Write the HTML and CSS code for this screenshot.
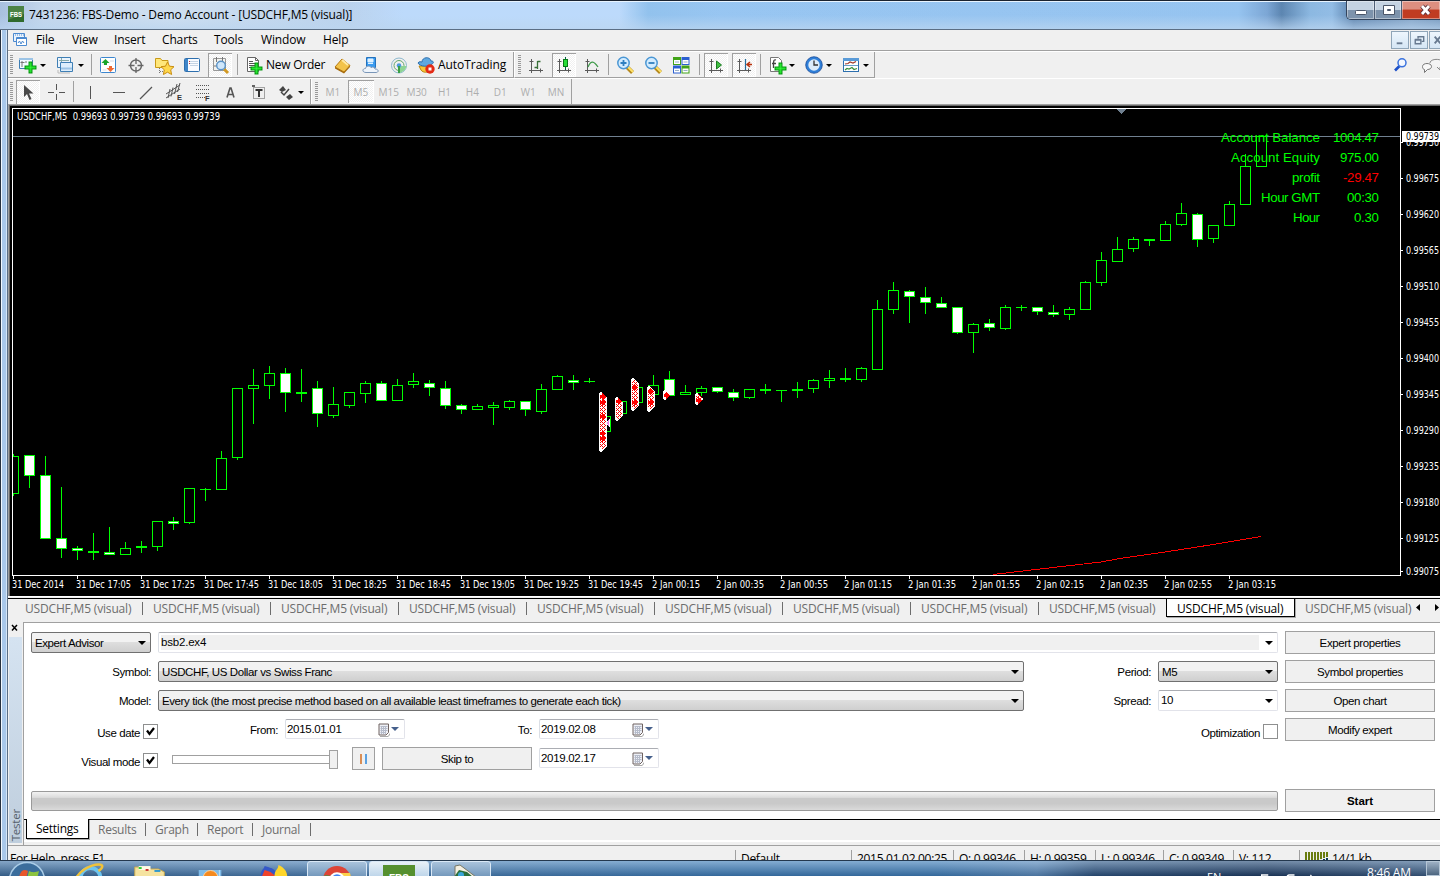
FILE: index.html
```html
<!DOCTYPE html>
<html lang="en">
<head>
<meta charset="utf-8">
<title>FBS-Demo - Demo Account</title>
<link rel="stylesheet" href="styles.css">
</head>
<body>
<svg width="0" height="0" class="defs">
  <defs>
    <symbol id="plus" viewBox="0 0 13 13"><path d="M4.5 .5h4v4h4v4h-4v4h-4v-4h-4v-4h4z" fill="#0b9a14"/><path d="M6 2h1v4h4v1H7v4H6V7H2V6h4z" fill="#35f53c" stroke="#22e02a"/></symbol>
    <symbol id="cal" viewBox="0 0 12 14"><path d="M2 13h8l2-3v2l-2 2H2z" fill="#aaa"/><path d="M1 1h9.500v8.500l-2.500 2.500H1z" fill="#eef0f6" stroke="#6e6260"/><path d="M2.500 3.500h7M2.500 5.500h7M2.500 7.500h7M2.500 9.500h5M3.500 3v8M5.500 3v8M7.500 3v8" stroke="#b5bbca"/></symbol>
    <symbol id="axes" viewBox="0 0 24 24"><path d="M7.500 6v14M5 17.500h14M5.500 8.500h4M16.500 15.500v4" stroke="#5a5a5a" fill="none"/></symbol>
    <symbol id="check" viewBox="0 0 15 15"><path d="M3 5.500l2.500 3.500L10 3" fill="none" stroke="#000" stroke-width="2.200"/></symbol>
  </defs>
</svg>
<div class="window">
  <header class="titlebar">
    <svg class="app-icon" viewBox="0 0 16 16"><rect width="16" height="16" fill="#2f6a2c"/><path d="M0 0h16v8L0 14z" fill="#4c8345"/><text x="2" y="11" font-size="6.500" font-weight="bold" textLength="12" lengthAdjust="spacingAndGlyphs" fill="#fff">FBS</text></svg>
    <span class="title">7431236: FBS-Demo - Demo Account - [USDCHF,M5 (visual)]</span>
    <div class="win-buttons">
      <span class="wb wb-min"><svg viewBox="0 0 28 18"><rect x="8.500" y="9.500" width="11" height="4" rx="1" fill="#fff" stroke="#4a5568"/></svg></span>
      <span class="wb wb-max"><svg viewBox="0 0 28 18"><path d="M8.500 4.500h11v9h-11zM12.500 8.500h3v1h-3z" fill="#fff" stroke="#4a5568" fill-rule="evenodd"/></svg></span>
      <span class="wb wb-close"><svg viewBox="0 0 38 18"><path d="M24 6l7 8M31 6l-7 8" stroke="#5a3038" stroke-width="4.500"/><path d="M24 6l7 8M31 6l-7 8" stroke="#fff" stroke-width="2.800"/></svg></span>
    </div>
  </header>
  <div class="body">
    <nav class="menu">
      <svg class="menu-icon" viewBox="0 0 16 16"><path d="M1.500 1.500h11v8h-11z" fill="#eaf3fc" stroke="#4c8ad0"/><path d="M1 3h12" stroke="#4c8ad0" stroke-dasharray="1 1"/><path d="M4.500 5.500h10v8h-10z" fill="#fff" stroke="#4c8ad0"/><path d="M4.500 6.500h10" stroke="#4c8ad0"/><path d="M6 11l1.500-2L9 12l1.500-3 1.500 2" fill="none" stroke="#4c8ad0"/></svg>
      <span class="w-file">File</span><span class="w-view">View</span><span class="w-insert">Insert</span><span class="w-charts">Charts</span><span class="w-tools">Tools</span><span class="w-window">Window</span><span>Help</span>
      <div class="mdi">
        <i><svg viewBox="0 0 17 17"><path d="M5 12h6" stroke="#687a90" stroke-width="2"/></svg></i>
        <i><svg viewBox="0 0 17 17"><path d="M7.500 7V5h6v5h-2M7 5h7M4.500 8.500h6v4h-6zM4 8h7" fill="none" stroke="#687a90" stroke-width="1.500"/></svg></i>
        <i><svg viewBox="0 0 17 17"><path d="M5 5l6 7M11 5l-6 7" stroke="#687a90" stroke-width="2"/></svg></i>
      </div>
    </nav>
    <div class="bars">
      <div class="toolbar tb1">
        <b class="grip"></b>
        <svg class="ic m3" viewBox="0 0 24 24"><path d="M3.500 5.500h13v10h-13z" fill="#f4faff" stroke="#3f7fb5"/><path d="M3 5h14v2H3z" fill="#9cc4e6"/><path d="M6 8v6M4.500 9.500h4M10 8v2" stroke="#777"/><use href="#plus" x="8" y="8" width="13" height="13"/></svg><b class="dd"></b>
        <svg class="ic m8" viewBox="0 0 24 24"><path d="M3.500 4.500h13v10h-13z" fill="#eaf4fd" stroke="#3f7fb5"/><path d="M5 7.500h10M7.500 5v8" stroke="#8aa" /><path d="M6.500 9.500h12v9h-12z" fill="#ddeefc" stroke="#3f7fb5"/><path d="M7 15.500h11" stroke="#9cc4e6" stroke-width="2"/><path d="M4 17v3h12" fill="none" stroke="#bbb"/></svg><b class="dd"></b>
        <b class="sep m7"></b>
        <svg class="ic m4" viewBox="0 0 24 24"><rect x="4.500" y="4.500" width="15" height="15" rx="1" fill="#fff" stroke="#3d87cf"/><path d="M6.500 8h3M6.500 11h3M14 8h4M6.500 17h4" stroke="#d5dde8"/><path d="M9.500 6l4 4h-2.500v2h-3v-2H5.500z" fill="#18a52a"/><path d="M14.500 19l-4-4H13v-2h3v2h2.500z" fill="#ee6a34"/></svg>
        <svg class="ic m4" viewBox="0 0 24 24"><circle cx="12" cy="12.500" r="5.500" fill="none" stroke="#666" stroke-width="1.400"/><path d="M12 5v6M12 14v6M4.500 12.500h6M13.500 12.500h6" stroke="#666" stroke-width="1.300"/></svg>
        <svg class="ic m4" viewBox="0 0 24 24"><path d="M3.500 14.500v-9h5l1.500 2h6v7z" fill="#ffe77a" stroke="#c99a18"/><path d="M7.500 15v6M8 18.500h3" stroke="#777" stroke-dasharray="1 1"/><path d="M15.500 9l2 4.200 4.500.5-3.300 3.100.9 4.700-4.100-2.300-4.100 2.300.9-4.700L9 13.700l4.500-.5z" fill="#ffd84c" stroke="#c98d10"/></svg>
        <svg class="ic m4" viewBox="0 0 24 24"><rect x="4.500" y="5.500" width="15" height="13" rx="1" fill="#f8fbff" stroke="#2d6fae"/><path d="M5 6h3v12H5z" fill="#3f85c8"/><path d="M10 8.500h8M10 10.500h8M10 12.500h8" stroke="#c3d3e4"/><path d="M9 8.500h1M9 10.500h1" stroke="#c33"/></svg>
        <svg class="ic pressed m4" viewBox="0 0 24 24"><path d="M5.500 5.500h12v12h-12z" fill="#f4f4f0" stroke="#999"/><path d="M8.500 4v5M14.500 4v8M6 13h3" stroke="#777"/><path d="M16 16l4 4" stroke="#d29a24" stroke-width="3"/><circle cx="13" cy="12.500" r="4.300" fill="#cfe7fb" stroke="#5b93c7" stroke-width="1.400"/></svg>
        <b class="sep m5"></b>
        <svg class="ic m4" viewBox="0 0 24 24"><path d="M5.500 4.500h8l3 3v11h-11z" fill="#fff" stroke="#666"/><path d="M7 8.500h4M7 10.500h7M7 12.500h7M7 14.500h5" stroke="#555"/><path d="M13.500 4.500v3h3" fill="none" stroke="#666"/><use href="#plus" x="8" y="9" width="13" height="13"/></svg><span class="tbtext w-order">New Order</span>
        <svg class="ic" viewBox="0 0 24 24"><path d="M4 14l7-8 8 6.500-6 6.500z" fill="#f3c34a" stroke="#b77a10"/><path d="M4 14l9 5v1.500l-9-5zM13 19l6-6.500v1.500l-6 6.500z" fill="#a66a0a"/><path d="M11 7l6 5" stroke="#ffe9a4" stroke-width="2"/></svg>
        <svg class="ic m4" viewBox="0 0 24 24"><path d="M7.500 4.500h9v10h-9z" fill="#3a9bf0" stroke="#2472bd"/><path d="M9 6h5v3H9zM9 10.500h5" fill="#dff1ff" stroke="#dff1ff"/><path d="M7 19.500c-4 0-4-4-.5-4 .5-3 4.500-3 5.500-1 2-1 4 0 4 1.500 4 0 4 3.500 1 3.500z" fill="#eef4fb" stroke="#7a96b8"/></svg>
        <svg class="ic m4" viewBox="0 0 24 24"><g fill="none" stroke="#8db8cd"><circle cx="12" cy="12.500" r="7.500"/><circle cx="12" cy="12.500" r="5" stroke="#66a66a"/></g><path d="M12 13v7c4-.5 7-4 7.500-7z" fill="#8ed494"/><circle cx="12" cy="12.500" r="2.300" fill="#4e9bdd"/><path d="M12 13v7" stroke="#39a046" stroke-width="2"/></svg>
        <svg class="ic m3" viewBox="0 0 24 24"><path d="M5 13h13l-2 4c-2 3-7 3-9 0z" fill="#f7c739" stroke="#b98511"/><path d="M4 10c1-2 3-1 4-1 0-5 8-6 9-1 3 0 3 2 1 3-3 3-12 3-14-1z" fill="#5fa8e0" stroke="#2d6fae"/><circle cx="16" cy="16" r="4.700" fill="#e32a15"/><path d="M14.500 14.500h3v3h-3z" fill="#fff"/></svg><span class="tbtext">AutoTrading</span>
      </div>
      <div class="toolbar tb1b">
        <b class="grip m3"></b>
        <svg class="ic m3" viewBox="0 0 24 24"><use href="#axes" width="24" height="24"/><path d="M13.500 8v8M13.500 8.500h3M10.500 14.500h3" stroke="#387038" stroke-width="1.300"/></svg>
        <svg class="ic pressed m4" viewBox="0 0 24 24"><use href="#axes" width="24" height="24"/><path d="M13.500 4v13" stroke="#064"/><rect x="11.500" y="6.500" width="4" height="7" fill="#27dd37" stroke="#087a18"/></svg>
        <svg class="ic m4" viewBox="0 0 24 24"><use href="#axes" width="24" height="24"/><path d="M8 14c3-7 6-6 10 0" stroke="#3f9a4a" fill="none" stroke-width="1.300"/></svg>
        <b class="sep m4"></b>
        <svg class="ic m4" viewBox="0 0 24 24"><path d="M14 14l5.500 5.500" stroke="#b5881c" stroke-width="4"/><path d="M15 14l5 5" stroke="#ffe36a" stroke-width="2"/><circle cx="10.500" cy="10" r="5.700" fill="#d3ecff" stroke="#4b97d4" stroke-width="1.500"/><path d="M10.500 7v6M7.500 10h6" stroke="#2e7fc0" stroke-width="1.800"/></svg>
        <svg class="ic m4" viewBox="0 0 24 24"><path d="M14 14l5.500 5.500" stroke="#b5881c" stroke-width="4"/><path d="M15 14l5 5" stroke="#ffe36a" stroke-width="2"/><circle cx="10.500" cy="10" r="5.700" fill="#d3ecff" stroke="#4b97d4" stroke-width="1.500"/><path d="M7.500 10h6" stroke="#2e7fc0" stroke-width="1.800"/></svg>
        <svg class="ic m4" viewBox="0 0 24 24"><path d="M4 4h8v8H4zM12.500 12.500h8v8h-8z" fill="#41a317"/><path d="M12.500 4h8v8h-8zM4 12.500h8v8H4z" fill="#2a5fd0"/><path d="M5 7h6v4H5zM13.500 7h6v4h-6zM5 15.500h6v4H5zM13.500 15.500h6v4h-6z" fill="#fff"/><path d="M6 9h4M14.500 9h4M6 17.500h4M14.500 17.500h4" stroke="#9ab0c8"/></svg>
        <b class="sep m6"></b>
        <svg class="ic pressed m4" viewBox="0 0 24 24"><use href="#axes" width="24" height="24"/><path d="M12.500 8l5 4-5 4z" fill="#3fbf3f" stroke="#1c7c22"/></svg>
        <svg class="ic pressed m4" viewBox="0 0 24 24"><use href="#axes" width="24" height="24"/><path d="M13.500 6v11" stroke="#246c9c" stroke-width="1.200"/><path d="M20 11.500h-4M18 9l-3 2.500 3 2.500" stroke="#b8320c" fill="none" stroke-width="1.500"/></svg>
        <b class="sep m4"></b>
        <svg class="ic m4" viewBox="0 0 24 24"><path d="M5.500 4.500h8l3 3v11h-11z" fill="#fff" stroke="#777"/><path d="M11 7c-3-1-2.500 3-2.500 8M7 10.500h4" fill="none" stroke="#444" stroke-width="1.300"/><use href="#plus" x="9" y="9" width="13" height="13"/></svg><b class="dd"></b>
        <svg class="ic m7" viewBox="0 0 24 24"><circle cx="12" cy="12" r="7" fill="#dcecfb" stroke="#2f7fd8" stroke-width="2.600"/><circle cx="12" cy="12" r="8.300" fill="none" stroke="#0d3f8f" stroke-width=".7"/><path d="M12 7.500V12h4" fill="none" stroke="#333" stroke-width="1.300"/></svg><b class="dd"></b>
        <svg class="ic m7" viewBox="0 0 24 24"><rect x="4.500" y="5.500" width="15" height="13" fill="#fff" stroke="#2d6fae"/><path d="M4 5h16v3H4z" fill="#5a9bd8"/><path d="M5 12.500h14" stroke="#6a9fc8"/><path d="M6 11l3-.5 2-1.500 3 1 3-1.500" fill="none" stroke="#a33a2a" stroke-width="1.200"/><path d="M6 17l2-1.500 2 .5 3-1.500 2 2 3-1" fill="none" stroke="#3a8f3a" stroke-width="1.200"/></svg><b class="dd"></b>
      </div>
      <div class="search">
        <svg viewBox="0 0 16 16"><path d="M6.500 9L2 13.500" stroke="#1d50c8" stroke-width="2.600"/><circle cx="9" cy="5.800" r="4" fill="#f4f8ff" stroke="#3a72dd" stroke-width="1.500"/></svg>
        <svg class="chat" viewBox="0 0 20 18"><path d="M9 6c0-5 14-5 14 1 0 2-2 3-4 3v3l-3-3" fill="#f4f4f4" stroke="#888"/><path d="M1.500 9.500c0-4 9-4 9 0 0 2-2 3-4 3l-3 3v-3c-1 0-2-1-2-3z" fill="#f8f8f8" stroke="#777"/></svg>
      </div>
    </div>
    <div class="bars bars2">
      <div class="toolbar tb2">
        <b class="grip"></b>
        <svg class="ic pressed m3" viewBox="0 0 24 24"><path d="M8 5v12l3-3 2.500 6 2-1-2.500-5.500h4.500z" fill="#4a4a4a"/></svg>
        <svg class="ic m4" viewBox="0 0 24 24"><path d="M12.500 4v6M12.500 14v6M4 12.500h6M15 12.500h6" stroke="#555"/></svg>
        <b class="sep m5"></b>
        <svg class="ic m4" viewBox="0 0 24 24"><path d="M12.500 6v13" stroke="#555"/></svg>
        <svg class="ic m4" viewBox="0 0 24 24"><path d="M7 12.500h12" stroke="#555"/></svg>
        <svg class="ic m4" viewBox="0 0 24 24"><path d="M6 19L18 7" stroke="#555" stroke-width="1.200"/></svg>
        <svg class="ic m4" viewBox="0 0 24 24"><path d="M4 14L18 5M4 18L18 9M8 9l-2 9M11 7.500l-2 9M15 4l-2.500 10M18 3l-2.500 9" stroke="#555"/><text x="15" y="20" font-size="7.500" font-weight="bold" fill="#333">E</text></svg>
        <svg class="ic m4" viewBox="0 0 24 24"><path d="M6 5.500h14M6 9.500h14M6 13.500h14M6 17.500h9" stroke="#555" stroke-dasharray="1 1"/><text x="15" y="21" font-size="7.500" font-weight="bold" fill="#333">F</text></svg>
        <svg class="ic m4" viewBox="0 0 24 24"><path d="M9 17.500l3-9.500h1l3 9.500M10 14.500h5" fill="none" stroke="#555" stroke-width="1.600"/></svg>
        <svg class="ic m4" viewBox="0 0 24 24"><path d="M7.500 7.500h11v11h-11z" fill="none" stroke="#555" stroke-dasharray="1 1"/><path d="M9.500 10h7M13 9v8" stroke="#333" stroke-width="2"/><path d="M6 6h3" stroke="#333" stroke-width="1.500"/></svg>
        <svg class="ic m4" viewBox="0 0 24 24"><path d="M5 10l4-4 3 4-4 2zM12 17l4-3 3 3-4 3z" fill="#444"/><path d="M7 12l3 3 5-6" fill="none" stroke="#444" stroke-width="1.500"/></svg><b class="dd"></b>
      </div>
      <div class="toolbar tb2b">
        <b class="grip m3"></b>
        <span class="tf m2">M1</span><span class="tf pressed">M5</span><span class="tf">M15</span><span class="tf">M30</span><span class="tf">H1</span><span class="tf">H4</span><span class="tf">D1</span><span class="tf">W1</span><span class="tf">MN</span>
      </div>
    </div>
    <svg class="chart" id="chart" viewBox="8 105 1432 492" shape-rendering="crispEdges"></svg>
    <div class="ctabs" id="ctabs"></div>
    <section class="tester">
      <aside><svg viewBox="0 0 8 8"><path d="M1 1l5 5.500M6 1L1 6.500" stroke="#000" stroke-width="1.500"/></svg><div><span>Tester</span></div></aside>
      <div class="panel">
        <div class="form">
          <div class="row">
            <div class="sel w120">Expert Advisor</div><div class="combo w1120"><em>bsb2.ex4</em></div><button>Expert properties</button>
          </div>
          <div class="row">
            <label class="w120">Symbol:</label><div class="sel w866">USDCHF, US Dollar vs Swiss Franc</div><label class="w120">Period:</label><div class="sel w120">M5</div><button>Symbol properties</button>
          </div>
          <div class="row">
            <label class="w120">Model:</label><div class="sel w866">Every tick (the most precise method based on all available least timeframes to generate each tick)</div><label class="w120">Spread:</label><div class="combo w120">10</div><button>Open chart</button>
          </div>
          <div class="row">
            <label class="w109 low">Use date</label><svg class="cb"><use href="#check" width="15" height="15"/></svg><label class="w113">From:</label><div class="date">2015.01.01<svg><use href="#cal" width="12" height="14"/></svg></div><label class="w120">To:</label><div class="date">2019.02.08<svg><use href="#cal" width="12" height="14"/></svg></div><label class="grow low">Optimization</label><svg class="cb cbr"></svg><button>Modify expert</button>
          </div>
          <div class="row">
            <label class="w109 low">Visual mode</label><svg class="cb"><use href="#check" width="15" height="15"/></svg><div class="slider"><i></i></div><div class="pause"><i></i><i></i></div><button class="skip">Skip to</button><div class="date">2019.02.17<svg><use href="#cal" width="12" height="14"/></svg></div>
          </div>
          <div class="row last"><div class="progress"></div><button class="bold">Start</button></div>
        </div>
        <div class="ttabs"><span class="on">Settings</span><span class="t-res">Results</span><span class="t-gra">Graph</span><span class="t-rep">Report</span><span class="t-jou">Journal</span></div>
      </div>
    </section>
    <footer class="status">
      <span class="s-help">For Help, press F1</span><span class="s-def">Default</span><span class="s-date">2015.01.02 00:25</span><span class="s-o">O: 0.99346</span><span class="s-h">H: 0.99359</span><span class="s-l">L: 0.99346</span><span class="s-c">C: 0.99349</span><span class="s-v">V: 112</span><span class="s-kb"><svg viewBox="0 0 24 12"><path d="M1 0v12M4 0v12M7 0v12M10 0v9M13 0v8M16 0v7M19 0v6M22 0v5" stroke="#6a7d10" stroke-width="2"/><path d="M10 10v2M13 9v3M16 8v4M19 7v5M22 6v6" stroke="#0e3c52" stroke-width="2"/></svg>14/1 kb</span>
    </footer>
  </div>
</div>
<div class="taskbar">
  <svg class="start" viewBox="0 0 60 16"><circle cx="27" cy="19" r="17.500" fill="#3b6d9c" stroke="#a9cbe6" stroke-width="1.500"/><path d="M19 16c2-7 5-8 9-6l-2 8z" fill="#e8572b"/><path d="M29 10c4 2 7 1 10 0l-2 8H27z" fill="#8cc43f"/></svg>
  <svg class="tk" viewBox="0 0 62 16"><circle cx="31" cy="17" r="10" fill="none" stroke="#6cc5f0" stroke-width="4"/><path d="M17 16C25 4 42 1 43 5c0 2-2 4-4 5" fill="none" stroke="#f0c23a" stroke-width="2.500"/></svg>
  <svg class="tk" viewBox="0 0 62 16"><path d="M14 16V6h10l2 2h12l6 3v5z" fill="#f5e3a0" stroke="#c9a94e"/><path d="M18 5h12v4H18z" fill="#fffbe6"/><path d="M18 7h3" stroke="#3c3" stroke-width="2"/><path d="M25 9h3" stroke="#c33" stroke-width="2"/><path d="M34 10h6" stroke="#39c" stroke-width="2"/></svg>
  <svg class="tk" viewBox="0 0 62 16"><path d="M17 9h23v7H17z" fill="#7fbbe8"/><path d="M38 9v7" stroke="#bfe0f7"/><circle cx="29" cy="17" r="7.500" fill="#f58a1f" stroke="#fbd2a0"/></svg>
  <svg class="tk" viewBox="0 0 62 16"><path d="M18 16c0-8 3-7 4-11 4 2 12 1 13 11z" fill="#3558c8"/><path d="M19 16l3-7 6 2 6 5z" fill="#f0432a"/><path d="M32 16c0-8 4-7 4-12 7 3 9 8 9 12z" fill="#ffd62a"/></svg>
  <div class="tbtn"><svg viewBox="0 0 58 16"><circle cx="29" cy="19" r="14" fill="#dd4436"/><path d="M16 14l8 5v-4z" fill="#2f9e4f"/><path d="M29 12h13l1 4H29z" fill="#fbd14b"/><circle cx="29" cy="19" r="6.800" fill="#4285f4" stroke="#fff" stroke-width="2"/></svg></div>
  <div class="tbtn lit"><svg viewBox="0 0 58 16"><rect x="13" y="4" width="32" height="12" fill="#55902f"/><text x="19" y="21" font-size="10" font-weight="bold" fill="#fff">FBS</text></svg></div>
  <div class="tbtn"><svg viewBox="0 0 58 16"><path d="M23 5l5-1 16 12H23z" fill="#f4efe0" stroke="#776"/><path d="M22 16l5-7 8 2 6 5z" fill="#2b6e3c"/><circle cx="29" cy="14" r="3" fill="#39a5d8"/></svg></div>
  <div class="tray"><span class="en">EN</span><svg viewBox="0 0 60 16"><path d="M3 16v-1h7M30 16l2-1h6M55 16l1-1" fill="none" stroke="#fff" stroke-width="1.500"/></svg><span class="clock">8:46 AM</span><i></i></div>
</div>
<script src="chart.js"></script>
</body>
</html>
```

FILE: styles.css
```css
* { box-sizing: border-box; }
body { margin: 0; background: #fff; font: 12px "Open Sans", "Noto Sans", sans-serif; color: #000; width: 1440px; height: 876px; overflow: hidden; }
.defs { position: absolute; }
svg { display: block; flex: none; }
.window { height: 860px; width: 1440px; overflow: hidden; display: flex; flex-direction: column; padding-left: 8px; background: linear-gradient(90deg, #26303e 0 1px, #f2f8fe 1px 2px, #a9c8ea 2px 6px, #d5e6f8 6px 7px, #5b6e84 7px 8px); }

.titlebar { height: 30px; flex: none; margin-left: -8px; padding: 0 0 2px 8px; display: flex; align-items: center; border-top: 1px solid #1a2330; border-bottom: 1px solid #5b6e84; box-shadow: inset 0 1px 0 #e8f4ff;
  background: linear-gradient(180deg, rgba(255,255,255,.1) 0 50%, rgba(190,215,240,.75) 100%), linear-gradient(90deg, #9fb9dc 0, #bdd2ea 3%, #c9dbee 12%, #b3cdea 24%, #b5d6fb 28%, #b5d6fb 43%, #86bbeb 45%, #8cbff0 50%, #8abdee 86%, #6d9cd0 88%, #4a78a8 89%, #7fb0de 91%, #86b5e2 92.500%, #446f9f 94%, #7095bd 98%, #5f86b0 100%); }
.app-icon { width: 16px; height: 16px; margin-right: 5px; font-family: "Liberation Sans", sans-serif; }
.title { letter-spacing: -.16px; white-space: nowrap; }
.win-buttons { margin-left: auto; align-self: flex-start; display: flex; height: 19px; border: 1px solid #33445c; border-top: 0; border-right: 0; border-radius: 0 0 0 5px; overflow: hidden; }
.wb { width: 28px; border-right: 1px solid #4d5e76; background: linear-gradient(#c5d3e2 0 50%, #7d93ac 50% 100%); box-shadow: inset 0 0 0 1px rgba(255,255,255,.4); }
.wb svg { width: 28px; height: 18px; }
.wb-max { width: 27px; }
.wb-close { width: 38px; border: 0; background: linear-gradient(#dd8f80 0 45%, #c03c22 50% 100%); }
.wb-close svg { width: 38px; margin-left: -4px; margin-top: -1px; }
.body { width: 1432px; background: #f0f0f0; flex: 1; display: flex; flex-direction: column; min-height: 0; }

.menu { height: 21px; flex: none; display: flex; align-items: center; border-bottom: 1px solid #a0a0a0; padding: 0 0 1px 4px; letter-spacing: -.15px; }
.menu-icon { width: 16px; height: 16px; margin-right: 8px; }
.w-file { width: 36px; } .w-view { width: 42px; } .w-insert { width: 48px; } .w-charts { width: 52px; } .w-tools { width: 47px; } .w-window { width: 62px; }
.mdi { margin: 1px 0 0 auto; width: 49px; display: flex; gap: 1px; overflow: hidden; }
.mdi i { width: 18px; height: 18px; flex: none; border: 1px solid #8fa5b8; background: linear-gradient(#eef6fd, #d5e6f5); }
.mdi svg { width: 16px; height: 16px; }

.bars { height: 27px; flex: none; display: flex; border-top: 1px solid #fff; }
.toolbar { display: flex; align-items: center; border-bottom: 1px solid #a0a0a0; }
.tb1 { width: 506px; padding-left: 2px; border-right: 1px solid #a0a0a0; }
.tb1b { border-right: 1px solid #a0a0a0; width: 361px; border-left: 1px solid #fff; }
.grip { width: 3px; height: 19px; flex: none; background: repeating-linear-gradient(#999 0 1px, transparent 1px 2px); }
.m2 { margin-left: 2px; } .m3 { margin-left: 3px; } .m4 { margin-left: 4px; } .m5 { margin-left: 5px; } .m6 { margin-left: 6px; } .m7 { margin-left: 7px; } .m8 { margin-left: 8px; }
.ic { width: 24px; height: 24px; font-family: "Liberation Sans", sans-serif; }
.tf.pressed, .ic.pressed { background: repeating-conic-gradient(#fff 0 25%, #f0f0f0 0 50%) 0 0 / 2px 2px; box-shadow: inset 1px 1px 0 #a0a0a0, inset -1px -1px 0 #fff; }
.dd { border: 3px solid transparent; border-top-color: #000; border-bottom: 0; width: 6px; flex: none; margin-top: 1px; }
.sep { width: 1px; height: 21px; background: #a0a0a0; flex: none; }
.tbtext { letter-spacing: -.05px; white-space: nowrap; margin-top: -1px; }
.w-order { width: 65px; letter-spacing: -.25px; }
.search { margin-left: auto; display: flex; gap: 12px; padding-top: 5px; width: 47px; overflow: hidden; }
.search svg { width: 16px; height: 16px; flex: none; }
.search .chat { width: 20px; height: 18px; }
.bars2 { height: 27px; border-bottom: 1px solid #a0a0a0; }
.bars2 .toolbar { border-bottom: 0; }
.tb2 { width: 303px; padding-left: 2px; border-right: 1px solid #a0a0a0; }
.tb2b { border-right: 1px solid #a0a0a0; width: 261px; border-left: 1px solid #fff; }
.tf { width: 26px; height: 23px; margin-right: 2px; text-align: center; line-height: 25px; color: #adadad; font-size: 10px; }
.tf.m2 { margin-left: 2px; }
.chart { width: 1432px; height: 492px; flex: none; font-family: "DejaVu Sans Condensed", "DejaVu Sans", sans-serif; }

.ctabs { height: 20px; flex: none; display: flex; border-top: 1px solid #000; position: relative; padding-left: 7px; color: #6d6d6d; overflow: hidden; margin-top: 1px; letter-spacing: -.17px; }
.ctabs span { width: 128px; flex: none; padding-left: 10px; height: 13px; white-space: nowrap; border-right: 1px solid #6d6d6d; margin-top: 3px; line-height: 13px; }
.ctabs span.pre { border-right-color: transparent; }
.ctabs span.on { color: #000; background: #fff; border: 1px solid #000; border-top: 0; margin-top: -1px; height: 19px; width: 129px; margin-left: -1px; padding-left: 10px; line-height: 21px; box-shadow: 1px 1px 0 #aaa; }
.ctabs .arrows { position: absolute; right: 1px; top: 4px; width: 24px; height: 9px; }

.tester { height: 225px; flex: none; display: flex; margin-top: 2px; }
aside { width: 15px; flex: none; padding: 4px 1px 0 1px; }
aside svg { width: 8px; height: 8px; margin: 0 0 5px 2px; }
aside div { height: 206px; width: 13px; background: linear-gradient(#d5e3f1, #bfcedd); color: #555f6b; position: relative; }
aside span { position: absolute; left: 0; bottom: 2px; writing-mode: vertical-rl; transform: rotate(180deg); line-height: 14px; font-size: 11.500px; letter-spacing: -.2px; }
.panel { flex: 1; border-left: 1px solid #a0a0a0; border-top: 1px solid #a0a0a0; margin-top: 2px; display: flex; flex-direction: column; background: #f0f0f0; }
.form { height: 196px; background: #fff; padding: 8px 5px 0 7px; display: flex; flex-direction: column; font-family: "Liberation Sans", Arial, sans-serif; font-size: 11.500px; letter-spacing: -.4px; }
.row { display: flex; height: 23px; margin-bottom: 6px; gap: 7px; align-items: center; flex: none; }
.row > * { flex: none; }
.row.last { margin-top: 13px; }
button { width: 150px; height: 23px; border: 1px solid #a0a0a0; background: #f0f0f0; font: inherit; letter-spacing: inherit; padding: 0; color: #000; margin-left: auto; }
button.bold { font-weight: bold; letter-spacing: 0; }
label { text-align: right; white-space: nowrap; }
.low { padding-top: 6px; }
.w120 { width: 120px; } .w866 { width: 866px; } .w1120 { width: 1120px; } .w109 { width: 109px; } .w113 { width: 113px; }
.sel, .combo { height: 21px; line-height: 20px; padding-left: 3px; position: relative; border: 1px solid #707070; border-radius: 2px; background: linear-gradient(#f2f2f2 0 45%, #dedede 50%, #cfcfcf); white-space: nowrap; }
.combo { background: #fff; border-color: #abadb3 #e2e3ea #e2e3ea #dbdfe6; padding: 0 17px 0 2px; line-height: 18px; }
.combo em { display: block; font-style: normal; background: #f0f0f0; margin: 2px 1px 0 0; height: 15px; line-height: 14px; letter-spacing: -.2px; }
.sel::after, .combo::after { content: ""; position: absolute; right: 4px; top: 8px; border: 4px solid transparent; border-top-color: #000; border-bottom: 0; }
.cb { width: 15px; height: 15px; border: 1px solid #8e8f8f; margin: 3px 0 0 -4px; }
.cbr { margin-left: -4px; }
.grow { flex: 1 !important; }
.date { width: 120px; height: 20px; border: 1px solid; border-color: #abadb3 #e2e3ea #e2e3ea #dbdfe6; border-radius: 2px; padding-left: 1px; line-height: 19px; position: relative; margin-top: -2px; letter-spacing: -.3px; }
.date svg { position: absolute; left: 92px; top: 3px; width: 12px; height: 14px; }
.date::after { content: ""; position: absolute; right: 5px; top: 7px; border: 4px solid transparent; border-top-color: #46608c; border-bottom: 0; }
.slider { width: 166px; height: 9px; border: 1px solid #a0a0a0; margin: 2px 0 0 7px; position: relative; }
.slider i { position: absolute; right: -1px; top: -6px; width: 9px; height: 19px; border: 1px solid #a0a0a0; background: #f0f0f0; }
.pause { width: 23px; height: 23px; border: 1px solid #a0a0a0; background: #f0f0f0; display: flex; gap: 3px; justify-content: center; align-items: center; margin-left: 7px; }
.pause i { width: 2px; height: 10px; background: #d98e55; }
.pause i + i { background: #5aa0e0; }
.skip { margin-left: 0; }
.progress { width: 1247px; height: 20px; border: 1px solid #9a9a9a; border-radius: 2px; background: linear-gradient(#f2f2f2 0, #dcdcdc 30%, #c9c9c9 35% 65%, #dadada); }
.ttabs { display: flex; border-top: 1px solid #000; height: 23px; color: #6d6d6d; border-bottom: 2px solid #fff; letter-spacing: -.25px; }
.ttabs span { height: 13px; line-height: 13px; margin-top: 3px; border-right: 1px solid #6d6d6d; padding-left: 9px; }
.ttabs .on { background: #fff; color: #000; width: 63px; height: 20px; line-height: 19px; margin: -1px 0 0 2px; border: 1px solid #000; border-top: 0; box-shadow: 1px 1px 0 #aaa; }
.t-res { width: 57px; } .t-gra { width: 52px; } .t-rep { width: 55px; } .t-jou { width: 58px; }

.status { height: 30px; flex: none; border-top: 1px solid #a0a0a0; display: flex; padding-left: 2px; white-space: nowrap; letter-spacing: -.3px; }
.status span { margin-top: 4px; height: 24px; line-height: 17px; padding-left: 5px; border-left: 1px solid #a0a0a0; }
.status .s-help { width: 725px; border: 0; padding: 0; }
.s-def { width: 116px; } .s-date { width: 102px; } .s-o { width: 71px; } .s-h { width: 71px; } .s-l { width: 68px; } .s-c { width: 70px; } .s-v { width: 66px; }
.s-kb { display: flex; gap: 3px; }
.s-kb svg { width: 24px; height: 12px; margin-top: 2px; }

.taskbar { width: 1440px; height: 16px; display: flex; overflow: hidden; border-top: 1px solid #24384e; background: linear-gradient(180deg, rgba(190,215,240,.55), rgba(20,50,90,.25)), linear-gradient(90deg, #3f6a94 0, #4d7ba8 20%, #3e7ab0 50%, #3e7ab0 65%, #5c88b4 72%, #2a4a70 76%, #1c3353 88%, #3c5878 100%); }
.start { width: 60px; height: 16px; }
.tk { width: 61px; height: 16px; }
.tbtn { width: 60px; height: 18px; border: 1px solid #d9e8f6; border-radius: 3px; margin-right: 2px; background: linear-gradient(#a9c3dc, #6d93b8); }
.tbtn:first-of-type { margin-left: 3px; }
.tbtn.lit { background: linear-gradient(#e8f1f8, #b9d2e8); }
.tbtn svg { width: 58px; height: 16px; font-family: "Liberation Sans", sans-serif; margin-top: -1px; }
.tray { margin-left: auto; display: flex; color: #fff; width: 233px; font-size: 12px; }
.en { padding-top: 9px; line-height: 14px; width: 50px; font-size: 11px; }
.tray svg { width: 60px; height: 15px; }
.clock { line-height: 24px; margin-left: 50px; width: 59px; letter-spacing: -.2px; }
.tray i { width: 14px; border: 1px solid #b5c6d6; background: linear-gradient(#9db0c4, #4d6680); }
```

FILE: chart.js
```js
// [high, bodyTop, bodyBottom, low, filled] in chart pixels, one bar every 16px from x = 13
const bars = [
  [454,456,494,496,0],[455,455,476,488,1],[456,475,539,539,1],[487,538,549,558,1],[546,548,551,560,1],[533,551,553,560,0],
  [527,552,555,555,1],[542,548,555,555,0],[541,546,548,553,0],[521,521,547,551,0],[517,521,524,530,1],[488,488,523,524,0],
  [488,489,490,501,0],[451,458,490,490,0],[388,388,458,460,0],[369,385,389,424,0],[366,373,386,399,0],[368,373,393,412,1],
  [369,392,394,402,0],[381,388,414,427,1],[387,404,416,418,0],[392,392,406,408,0],[381,383,394,403,0],[381,383,401,401,1],
  [379,385,401,401,0],[373,381,385,388,0],[380,383,388,396,1],[381,388,406,409,1],[404,405,410,414,1],[404,406,410,410,0],
  [402,405,408,425,0],[400,401,408,410,0],[401,401,410,416,1],[384,389,412,414,0],[375,376,390,390,0],[375,380,383,390,1],
  [378,381,382,383,0],[416,416,432,432,0],[401,401,414,414,0],[387,387,403,403,0],[375,385,395,395,0],[371,379,396,396,1],
  [385,392,395,395,0],[386,388,393,396,0],[387,387,392,393,1],[389,392,398,401,1],[389,389,398,399,0],[384,389,391,394,0],
  [390,390,391,402,0],[382,389,391,398,0],[379,380,389,393,0],[370,378,381,388,0],[368,378,380,382,0],[367,368,380,382,0],
  [300,309,370,370,0],[282,290,310,314,0],[290,291,297,323,1],[287,297,303,314,1],[297,303,308,308,1],[307,307,333,334,1],
  [323,324,333,353,0],[319,323,328,331,1],[305,307,329,330,0],[305,307,308,311,0],[307,307,312,315,1],[305,312,315,317,1],
  [307,309,315,320,0],[281,282,310,310,0],[252,260,283,286,0],[237,249,262,262,0],[237,239,249,252,0],[239,239,241,246,0],
  [221,224,241,241,0],[203,213,225,226,0],[213,214,240,247,1],[225,225,239,243,0],[201,204,226,226,0],[154,166,205,205,0],
  [136,136,167,167,0]
];
const rect = (x, y, w, h, f) => `<rect x="${x}" y="${y}" width="${w}" height="${h}" fill="${f}"/>`;
const text = (x, y, s, f, size, len, extra = 'lengthAdjust="spacingAndGlyphs"') =>
  `<text x="${x}" y="${y}" fill="${f}" font-size="${size}" textLength="${len}" ${extra}>${s}</text>`;
const sans = 'font-family="Liberation Sans, sans-serif" lengthAdjust="spacing"';

let o = `<defs><pattern id="chk" width="4" height="4" patternUnits="userSpaceOnUse"><rect width="4" height="4" fill="#fff"/><path d="M0 0h1v1H0zM1 1h1v1H1zM2 2h1v1H2zM3 3h1v1H3zM2 0h1v1H2zM0 2h1v1H0z" fill="red"/></pattern></defs>`;
o += rect(8, 105, 1432, 491, '#000') + rect(8, 105, 1432, 1, '#696969') + rect(8, 105, 1, 491, '#a0a0a0') + rect(9, 106, 1, 490, '#696969');
o += rect(8, 596, 1432, 1, '#fff');

// live price line
o += rect(13, 136, 1387, 1, '#708090');

bars.forEach(([h, t, b, l, f], i) => {
  const x = 13 + 16 * i;
  const left = i ? x - 5 : x;
  const w = i ? 11 : 6;
  o += rect(x, h, 1, Math.max(l - h, 1), '#0f0') + rect(left, t, w, b - t, '#0f0');
  if (b - t > 2) o += rect(i ? left + 1 : left, t + 1, i ? 9 : 5, b - t - 2, f ? '#fff' : '#000');
});

const legend = [['Account Balance','1004.47',99,46],['Account Equity','975.00',89,39],['profit','-29.47',28,36],['Hour GMT','00:30',59,32],['Hour','0.30',27,25]];
legend.forEach(([a, b, wa, wb], i) => {
  const y = 142 + 20 * i;
  o += text(1320 - wa, y, a, '#0f0', 13.3, wa, sans) + text(1379 - wb, y, b, i === 2 ? 'red' : '#0f0', 13.3, wb, sans);
});

// trade markers
[[599,392,452,[396,402,416,433,438]],[615,397,421,[401]],[631,378,411,[387,402]],[647,386,412,[391,402]],[663,390,400,[395]],[695,393,405,[400]]].forEach(([x, t, b, heads]) => {
  o += `<path d="M${x} ${t + 1}h1v-1h2v1h1v1h1v1h1v1h1v1h1V${b - 5}h-1v1h-1v1h-1v1h-1v1h-1v1h-2v-1h-1z" fill="#fff"/>`;
  o += `<path d="M${x + 1} ${t + 3}l3-2 3 4V${b - 5}l-4 3-2-2z" fill="url(#chk)"/>`;
  heads.forEach(y => { o += `<path d="M${x + 1} ${y - 1}h2v-2h1v1h1v1h1v1h1v1h-1v1h-1v1h-1v1h-1v-2h-2z" fill="red"/>`; });
});
o += '<path d="M606 423l4-5v10z" fill="#fff"/><path d="M607 423l2-4v8z" fill="#ee82ee"/>';

// moving average
o += '<path d="M993 574.500L1040 569 1101 562 1120 558.500 1165 552 1210 545 1261 536.500" fill="none" stroke="red"/>';

// frame and axes
o += rect(12, 108, 1389, 1, '#fff') + rect(12, 108, 1, 468, '#fff') + rect(1400, 108, 1, 468, '#fff') + rect(12, 575, 1389, 1, '#fff');
o += '<path d="M1117 109h9l-4.500 5z" fill="#708090"/>';
o += text(17, 120, 'USDCHF,M5&#160; 0.99693 0.99739 0.99693 0.99739', '#fff', 9.6, 203);

const price = (y, s, f = '#fff') => text(1406, y + 4, s, f, 9.6, 33);
o += price(142, '0.99730') + rect(1401, 142, 2, 1, '#fff');
['0.99675','0.99620','0.99565','0.99510','0.99455','0.99400','0.99345','0.99290','0.99235','0.99180','0.99125'].forEach((s, i) => {
  o += rect(1401, 178 + 36 * i, 2, 1, '#fff') + price(178 + 36 * i, s);
});
o += rect(1401, 571, 2, 1, '#fff') + price(571, '0.99075');
o += rect(1402, 131, 38, 11, '#fff') + price(136, '0.99739', '#000');

['31 Dec 2014','31 Dec 17:05','31 Dec 17:25','31 Dec 17:45','31 Dec 18:05','31 Dec 18:25','31 Dec 18:45','31 Dec 19:05','31 Dec 19:25','31 Dec 19:45','2 Jan 00:15','2 Jan 00:35','2 Jan 00:55','2 Jan 01:15','2 Jan 01:35','2 Jan 01:55','2 Jan 02:15','2 Jan 02:35','2 Jan 02:55','2 Jan 03:15'].forEach((s, i) => {
  o += rect(13 + 64 * i, 576, 1, 3, '#fff') + text(12 + 64 * i, 588, s, '#fff', 9.6, i === 0 ? 52 : i < 10 ? 55 : 48);
});
document.getElementById('chart').innerHTML = o;

let tabs = '';
for (let i = 0; i < 11; i++) tabs += `<span class="${i === 9 ? 'on' : i === 8 || i === 10 ? 'pre' : ''}">USDCHF,M5 (visual)</span>`;
document.getElementById('ctabs').innerHTML = tabs + '<svg class="arrows" viewBox="0 0 24 9"><path d="M5 1v7L1 4.500zM20 1v7l4-3.500z"/></svg>';
```
